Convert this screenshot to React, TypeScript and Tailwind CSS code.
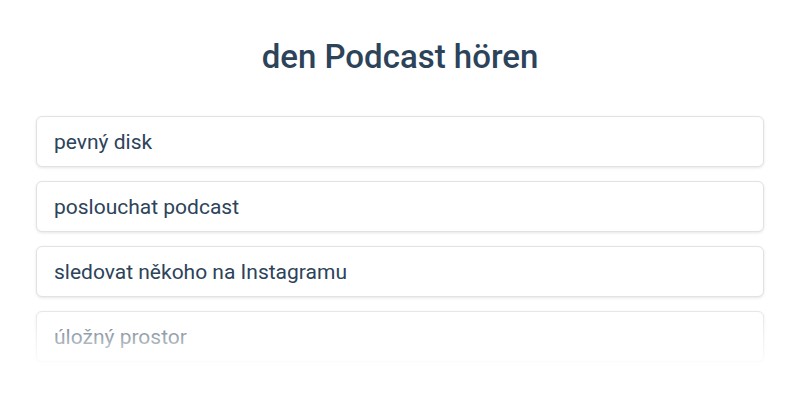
const ITEMS = [
  'pevný disk',
  'poslouchat podcast',
  'sledovat někoho na Instagramu',
  'úložný prostor',
];

export default function App() {
  return (
    <div
      className="relative h-[400px] w-[800px] overflow-hidden bg-white text-[#2c435a]"
      style={{ fontFamily: 'Roboto, "Liberation Sans", sans-serif' }}
    >
      <h1 className="pt-[37px] text-center text-[33px] font-medium leading-[40px]">
        den Podcast hören
      </h1>
      <div className="mt-[39px] flex flex-col gap-[14px] px-9">
        {ITEMS.map((t) => (
          <div
            key={t}
            className="h-[51px] rounded-md border border-[#e0e2e5] bg-white px-[17px] text-[21px] leading-[50px] shadow-[0_1px_3px_rgba(0,0,0,0.1)]"
          >
            {t}
          </div>
        ))}
      </div>
      <div className="pointer-events-none absolute inset-x-0 top-[300px] h-[70px] bg-gradient-to-b from-white/0 via-white/50 to-white" />
      <div className="absolute inset-x-0 top-[370px] bottom-0 bg-white" />
    </div>
  );
}
